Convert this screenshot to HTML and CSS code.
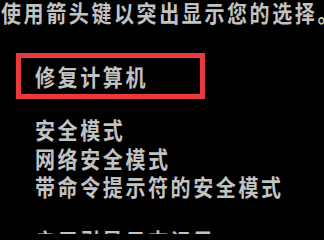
FILE: index.html
```html
<!DOCTYPE html>
<html lang="zh-CN">
<head>
<meta charset="utf-8">
<link rel="stylesheet" href="styles.css">
</head>
<body>
<div class="screen">
  <p class="prompt"><span class="txt">使用箭头键以突出显示您的选择。</span></p>
  <div class="highlight">
    <span class="txt">修复计算机</span>
  </div>
  <ul class="menu">
    <li class="item"><span class="txt">安全模式</span></li>
    <li class="item"><span class="txt">网络安全模式</span></li>
    <li class="item"><span class="txt">带命令提示符的安全模式</span></li>
  </ul>
  <ul class="menu next">
    <li class="item"><span class="txt">启用引导日志记录</span></li>
  </ul>
</div>
</body>
</html>
```

FILE: styles.css
```css
html, body {
  margin: 0;
  padding: 0;
  background: #000;
  overflow: hidden;
}
.screen {
  width: 324px;
  height: 234px;
  overflow: hidden;
  font-family: "Noto Sans CJK SC", "Noto Sans", sans-serif;
  font-size: 20px;
  letter-spacing: 2.6px;
  color: #c2c2c2;
  font-weight: 700;
}
.txt {
  display: inline-block;
  line-height: 23px;
  transform: scaleY(1.15);
}
.prompt {
  margin: 0;
  padding-left: 1px;
  line-height: 26px;
  white-space: nowrap;
}
.highlight {
  margin: 27px 0 0 16px;
  height: 36px;
  width: 165px;
  border: 5px solid #e8393c;
  display: flex;
  align-items: center;
  padding-left: 14px;
  white-space: nowrap;
}
.item {
  line-height: 28.5px;
  white-space: nowrap;
}
.menu {
  list-style: none;
  margin: 17px 0 0;
  padding: 0 0 0 35px;
}
.menu.next {
  margin-top: 25px;
}
```
